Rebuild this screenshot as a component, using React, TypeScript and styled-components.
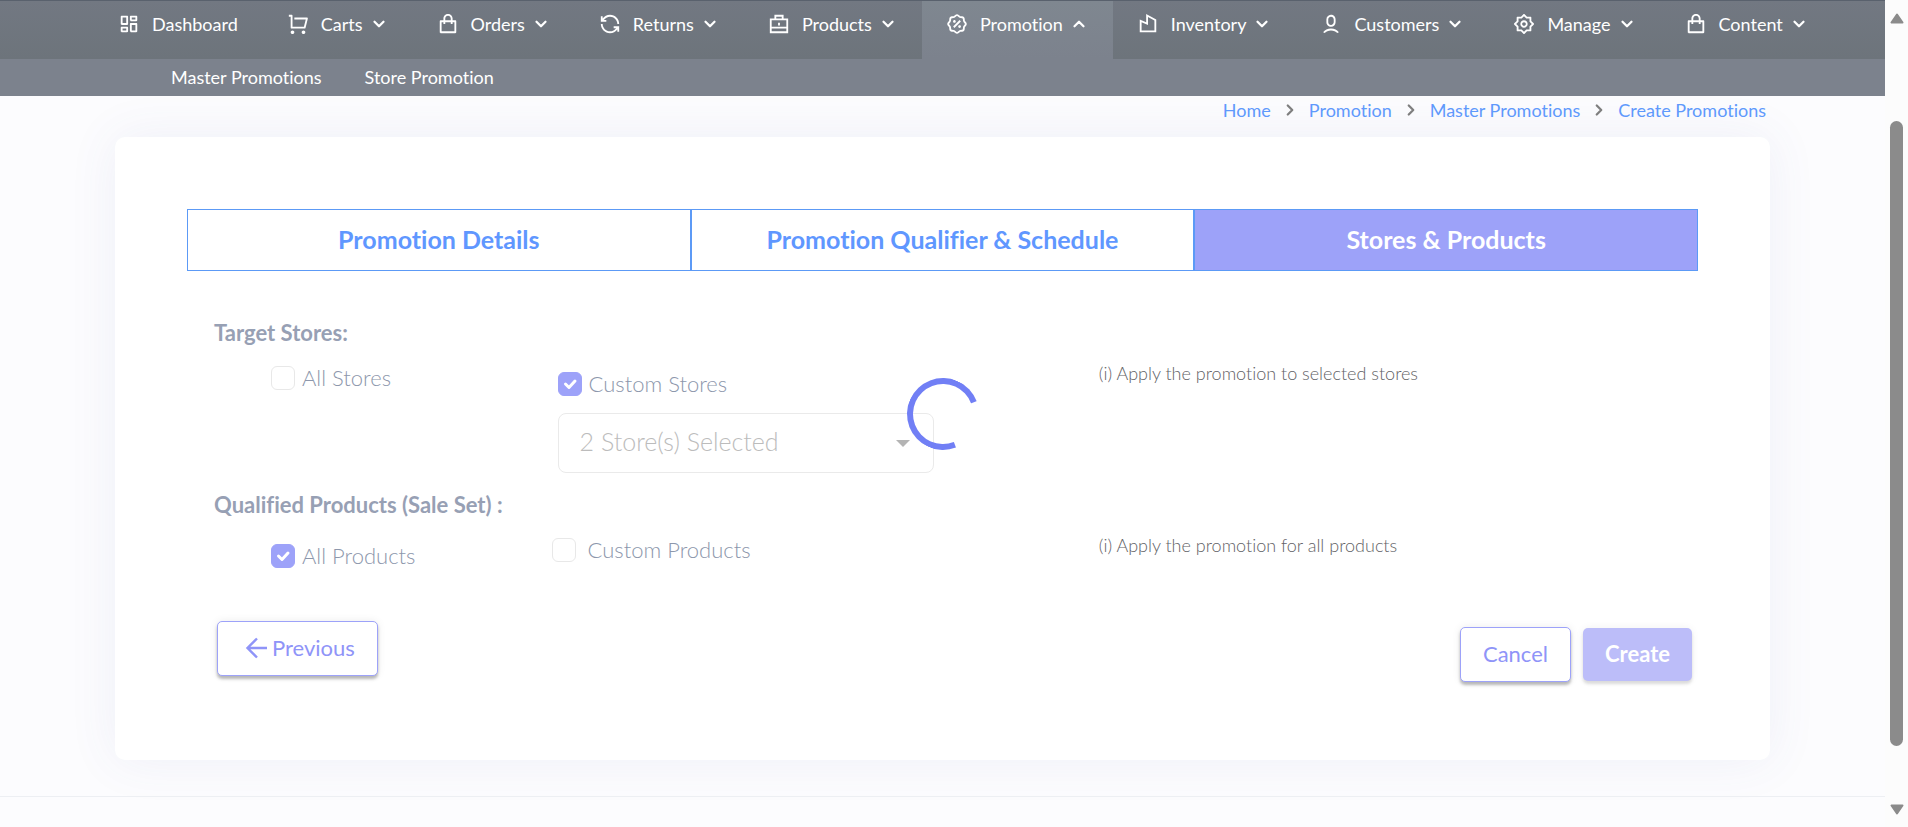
import React from "react";
import styled, { createGlobalStyle, css } from "styled-components";
import { ChevronDown, ChevronRight, ChevronUp } from "lucide-react";
import {
  RiBuilding3Line,
  RiDashboardLine,
  RiDiscountPercentLine,
  RiLoopLeftLine,
  RiSettings2Line,
  RiShoppingBagLine,
  RiShoppingCartLine,
  RiUser6Line,
} from "react-icons/ri";

const GlobalStyle = createGlobalStyle`
  *, *::before, *::after { box-sizing: border-box; }
  body {
    margin: 0;
    background: #fcfcfe;
    font-family: Lato, "Open Sans", sans-serif;
    font-variant-ligatures: none;
  }
  button, input, select { font-family: inherit; font-variant-ligatures: none; }
`;

const Shell = styled.div`
  display: flex;
  align-items: flex-start;
`;

const Page = styled.div`
  flex: 1;
  min-width: 0;
  min-height: 100vh;
  display: flex;
  flex-direction: column;
`;

/* Navigation */

const NavBar = styled.nav`
  display: flex;
  padding: 0 0 0 94px;
  border-top: 1px solid #59616d;
  background: linear-gradient(#727882, #6d747b);
`;

const NavItem = styled.a<{ $active?: boolean }>`
  display: flex;
  align-items: center;
  height: 58px;
  padding: 0 25px 13px 24px;
  color: #fff;
  font-size: 18px;
  line-height: 24px;
  text-decoration: none;
  white-space: nowrap;
  background: ${(p) => (p.$active ? "linear-gradient(#7f8790, #7c828d)" : "transparent")};
`;

const NavLabel = styled.span`
  margin-left: 12px;
`;

const NavArrow = styled.span`
  display: flex;
  margin-left: 7px;
`;

const SubNav = styled.nav`
  display: flex;
  align-items: center;
  gap: 43px;
  height: 37px;
  padding: 0 0 2px 171px;
  background: #7c828d;
`;

const SubNavLink = styled.a`
  color: #fff;
  font-size: 18px;
  line-height: 24px;
  text-decoration: none;
`;

/* Main area */

const Main = styled.main`
  padding: 0 115px 36px;
`;

const Breadcrumbs = styled.nav`
  display: flex;
  justify-content: flex-end;
  align-items: center;
  gap: 10px;
  height: 41px;
  padding: 0 4px 14px 0;
  color: #7f7f7f;
`;

const Crumb = styled.a`
  color: #5f99fc;
  font-size: 18px;
  line-height: 24px;
  text-decoration: none;
`;

const Card = styled.section`
  padding: 72px 72px 78px;
  border-radius: 10px;
  background: #fff;
  box-shadow: 0 0 50px rgba(82, 95, 160, 0.08);
`;

const Tabs = styled.div`
  display: grid;
  grid-template-columns: repeat(3, 1fr);
`;

const Tab = styled.button<{ $active?: boolean }>`
  height: 62px;
  padding: 0 6px 2px;
  border: 1px solid #5c9af6;
  background: ${(p) => (p.$active ? "#9da2f9" : "#fff")};
  color: ${(p) => (p.$active ? "#fff" : "#5f97ff")};
  font-size: 25px;
  font-weight: 700;
`;

const Form = styled.form`
  padding: 0 6px 0 27px;
`;

const SectionTitle = styled.h2<{ $gap: number }>`
  margin: ${(p) => p.$gap}px 0 14px;
  color: #97a0b4;
  font-size: 22px;
  font-weight: 700;
  line-height: 28px;
`;

const OptionRow = styled.div`
  display: grid;
  grid-template-columns: 281fr 548fr 594fr;
  padding-left: 57px;
`;

const OptionCell = styled.div<{ $top?: number; $left?: number }>`
  padding: ${(p) => p.$top ?? 0}px 0 0 ${(p) => p.$left ?? 0}px;
`;

const CheckLabel = styled.label<{ $gap?: number }>`
  display: flex;
  align-items: center;
  gap: ${(p) => p.$gap ?? 7}px;
  color: #8d97ac;
  font-size: 22px;
  font-weight: 300;
  line-height: 24px;
`;

const CheckBox = styled.span`
  position: relative;
  display: flex;
`;

const CheckInput = styled.input`
  appearance: none;
  width: 24px;
  height: 24px;
  margin: 0;
  border: 1px solid #e8e8e8;
  border-radius: 6px;
  background: #fff;

  &:checked {
    border-color: #9da2f9;
    background: #9da2f9;
  }
`;

const CheckMark = styled.svg`
  position: absolute;
  inset: 0;
  pointer-events: none;
  fill: none;
  stroke: #fff;
  stroke-width: 3;
  stroke-linecap: round;
  stroke-linejoin: round;
`;

const SelectBox = styled.div`
  position: relative;
  max-width: 376px;
  margin-top: 17px;
`;

const Select = styled.select`
  appearance: none;
  width: 100%;
  height: 60px;
  padding: 0 50px 5px 21px;
  border: 1px solid #eaeaea;
  border-radius: 8px;
  background: #fff;
  color: #bcbcbc;
  font-size: 25px;
  font-weight: 300;
`;

const SelectArrow = styled.span`
  position: absolute;
  right: 24px;
  top: 27px;
  border: 7px solid transparent;
  border-top-color: #b4b4b4;
  border-bottom-width: 0;
  pointer-events: none;
`;

const Hint = styled.p`
  margin: 0;
  color: #626266;
  font-size: 18px;
  font-weight: 300;
  line-height: 24px;
`;

const Actions = styled.div`
  display: flex;
  align-items: flex-start;
  justify-content: space-between;
  margin-top: 53px;
  padding-left: 3px;
`;

const ActionGroup = styled.div`
  display: flex;
  align-items: center;
  gap: 12px;
  margin-top: 6px;
`;

const outlined = css`
  height: 55px;
  border: 1px solid #9da2f9;
  background: #fff;
  color: #8f94f8;
  font-weight: 400;
  box-shadow: 0 3px 3px rgba(0, 0, 0, 0.26), 0 0 8px rgba(0, 0, 0, 0.08);
`;

const filled = css`
  height: 53px;
  border: 0;
  background: #bcbdf9;
  color: #fff;
  font-weight: 700;
  box-shadow: 0 3px 3px rgba(0, 0, 0, 0.12), 0 0 8px rgba(0, 0, 0, 0.06);
`;

const Button = styled.button<{ $filled?: boolean }>`
  display: flex;
  align-items: center;
  gap: 5px;
  padding: 0 22px 2px;
  border-radius: 5px;
  font-size: 22px;
  ${(p) => (p.$filled ? filled : outlined)}
`;

const BackButton = styled(Button)`
  padding: 0 22px 2px 27px;
`;

const Footer = styled.footer`
  flex: 1;
  border-top: 1px solid #edeff3;
`;

/* Loading indicator over the page */

const LoadingLayer = styled.div`
  position: fixed;
  inset: 0 23px 0 0;
  display: grid;
  place-items: center;
  pointer-events: none;
`;

const Spinner = styled.div`
  width: 72px;
  height: 72px;
  border: 6px solid #717ff5;
  border-right-color: transparent;
  border-radius: 50%;
  transform: rotate(24deg);
`;

/* Window scroll bar */

const ScrollBar = styled.div`
  position: sticky;
  top: 0;
  display: flex;
  flex-direction: column;
  align-items: center;
  width: 23px;
  height: 100vh;
  padding: 13px 0 12px;
  background: #fcfcfc;
`;

const ScrollTrack = styled.div`
  flex: 1;
  display: grid;
  grid-template-rows: 97fr 625fr 58fr;
`;

const ScrollThumb = styled.div`
  grid-row: 2;
  width: 13px;
  border-radius: 7px;
  background: #8b8b8b;
`;

const ScrollArrow = ({ down }: { down?: boolean }) => (
  <svg width="14" height="11" viewBox="0 0 14 11" aria-hidden="true">
    <path
      d={down ? "M1.5 1.5h11L7 9.5z" : "M1.5 9.5h11L7 1.5z"}
      fill="#8b8b8b"
      stroke="#8b8b8b"
      strokeWidth="2"
      strokeLinejoin="round"
    />
  </svg>
);

const CaseIcon = ({ size = 22 }: { size?: number }) => (
  <svg width={size} height={size} viewBox="0 0 24 24" fill="none" stroke="currentColor" strokeWidth="2" aria-hidden="true">
    <path d="M3 7h18v14H3zM8 7V3h8v4M3 16h18" />
    <path d="M12 10.500v3" />
  </svg>
);

const ArrowLeftIcon = () => (
  <svg width="22" height="22" viewBox="0 0 22 22" fill="none" stroke="currentColor" strokeWidth="2.4" aria-hidden="true">
    <path d="M22 11H2M12 1.500L2.500 11l9.500 9.500" />
  </svg>
);

type IconType = React.ComponentType<{ size?: number }>;

const navItems: { label: string; icon: IconType; menu: boolean; active?: boolean }[] = [
  { label: "Dashboard", icon: RiDashboardLine, menu: false },
  { label: "Carts", icon: RiShoppingCartLine, menu: true },
  { label: "Orders", icon: RiShoppingBagLine, menu: true },
  { label: "Returns", icon: RiLoopLeftLine, menu: true },
  { label: "Products", icon: CaseIcon, menu: true },
  { label: "Promotion", icon: RiDiscountPercentLine, menu: true, active: true },
  { label: "Inventory", icon: RiBuilding3Line, menu: true },
  { label: "Customers", icon: RiUser6Line, menu: true },
  { label: "Manage", icon: RiSettings2Line, menu: true },
  { label: "Content", icon: RiShoppingBagLine, menu: true },
];

const crumbs = ["Home", "Promotion", "Master Promotions", "Create Promotions"];

function Check({ label, checked, gap }: { label: string; checked?: boolean; gap?: number }) {
  const [on, setOn] = React.useState(!!checked);
  return (
    <CheckLabel $gap={gap}>
      <CheckBox>
        <CheckInput type="checkbox" checked={on} onChange={(e) => setOn(e.target.checked)} />
        {on && (
          <CheckMark viewBox="0 0 24 24" width="24" height="24" aria-hidden="true">
            <path d="M7.500 12l3.500 3.500 6-6.500" />
          </CheckMark>
        )}
      </CheckBox>
      {label}
    </CheckLabel>
  );
}

export default function App() {
  return (
    <Shell>
      <GlobalStyle />
      <Page>
        <header>
          <NavBar aria-label="Main">
            {navItems.map(({ label, icon: Icon, menu, active }) => (
              <NavItem key={label} href="#" $active={active}>
                <Icon size={22} />
                <NavLabel>{label}</NavLabel>
                {menu && (
                  <NavArrow>
                    {active ? <ChevronUp size={18} strokeWidth={3} /> : <ChevronDown size={18} strokeWidth={3} />}
                  </NavArrow>
                )}
              </NavItem>
            ))}
          </NavBar>
          <SubNav aria-label="Promotion">
            <SubNavLink href="#">Master Promotions</SubNavLink>
            <SubNavLink href="#">Store Promotion</SubNavLink>
          </SubNav>
        </header>

        <Main>
          <Breadcrumbs aria-label="Breadcrumb">
            {crumbs.map((crumb, i) => (
              <React.Fragment key={crumb}>
                {i > 0 && <ChevronRight size={18} strokeWidth={3} />}
                <Crumb href="#">{crumb}</Crumb>
              </React.Fragment>
            ))}
          </Breadcrumbs>

          <Card>
            <Tabs role="tablist">
              <Tab role="tab" type="button">Promotion Details</Tab>
              <Tab role="tab" type="button">Promotion Qualifier &amp; Schedule</Tab>
              <Tab role="tab" type="button" aria-selected="true" $active>Stores &amp; Products</Tab>
            </Tabs>

            <Form onSubmit={(e) => e.preventDefault()}>
              <SectionTitle $gap={48}>Target Stores:</SectionTitle>
              <OptionRow>
                <OptionCell $top={5}>
                  <Check label="All Stores" />
                </OptionCell>
                <OptionCell $top={11} $left={6}>
                  <Check label="Custom Stores" checked />
                  <SelectBox>
                    <Select aria-label="Stores">
                      <option>2 Store(s) Selected</option>
                    </Select>
                    <SelectArrow />
                  </SelectBox>
                </OptionCell>
                <Hint>(i) Apply the promotion to selected stores</Hint>
              </OptionRow>

              <SectionTitle $gap={18}>Qualified Products (Sale Set) :</SectionTitle>
              <OptionRow>
                <OptionCell $top={11}>
                  <Check label="All Products" checked />
                </OptionCell>
                <OptionCell $top={5}>
                  <Check label="Custom Products" gap={12} />
                </OptionCell>
                <Hint>(i) Apply the promotion for all products</Hint>
              </OptionRow>

              <Actions>
                <BackButton type="button">
                  <ArrowLeftIcon />
                  Previous
                </BackButton>
                <ActionGroup>
                  <Button type="button">Cancel</Button>
                  <Button type="submit" $filled>Create</Button>
                </ActionGroup>
              </Actions>
            </Form>
          </Card>
        </Main>
        <Footer />
      </Page>

      <ScrollBar aria-hidden="true">
        <ScrollArrow />
        <ScrollTrack>
          <ScrollThumb />
        </ScrollTrack>
        <ScrollArrow down />
      </ScrollBar>

      <LoadingLayer>
        <Spinner role="status" aria-label="Loading" />
      </LoadingLayer>
    </Shell>
  );
}
